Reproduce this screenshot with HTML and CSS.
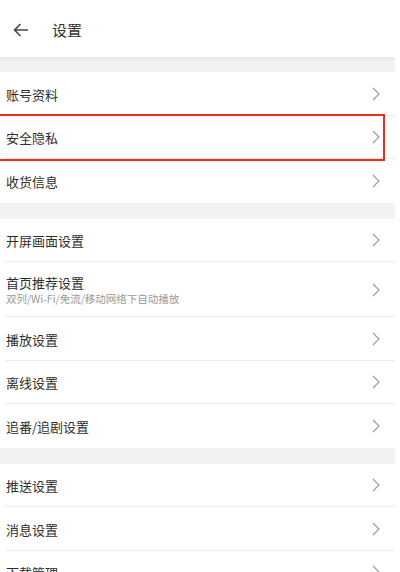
FILE: index.html
```html
<!DOCTYPE html>
<html lang="zh">
<head>
<meta charset="utf-8">
<link rel="stylesheet" href="styles.css">
</head>
<body>
<div class="page">
  <header class="topbar">
    <svg class="back" width="16" height="14" viewBox="0 0 16 14"><path d="M15 7H1.5M7.5 1L1.5 7l6 6" fill="none" stroke="#444" stroke-width="1.6"/></svg>
    <span class="title">设置</span>
  </header>
  <div class="gap first"></div>
  <section class="group">
    <div class="row"><span class="label">账号资料</span><svg class="chev" viewBox="0 0 8 14"><path d="M1 1l6 6-6 6" fill="none" stroke="#999" stroke-width="1.1"/></svg></div>
    <div class="row hl"><span class="label">安全隐私</span><svg class="chev" viewBox="0 0 8 14"><path d="M1 1l6 6-6 6" fill="none" stroke="#999" stroke-width="1.1"/></svg></div>
    <div class="row last"><span class="label">收货信息</span><svg class="chev" viewBox="0 0 8 14"><path d="M1 1l6 6-6 6" fill="none" stroke="#999" stroke-width="1.1"/></svg></div>
  </section>
  <div class="gap"></div>
  <section class="group">
    <div class="row"><span class="label">开屏画面设置</span><svg class="chev" viewBox="0 0 8 14"><path d="M1 1l6 6-6 6" fill="none" stroke="#999" stroke-width="1.1"/></svg></div>
    <div class="row tall"><div class="texts"><span class="label">首页推荐设置</span><span class="sub">双列/Wi-Fi/免流/移动网络下自动播放</span></div><svg class="chev" viewBox="0 0 8 14"><path d="M1 1l6 6-6 6" fill="none" stroke="#999" stroke-width="1.1"/></svg></div>
    <div class="row"><span class="label">播放设置</span><svg class="chev" viewBox="0 0 8 14"><path d="M1 1l6 6-6 6" fill="none" stroke="#999" stroke-width="1.1"/></svg></div>
    <div class="row"><span class="label">离线设置</span><svg class="chev" viewBox="0 0 8 14"><path d="M1 1l6 6-6 6" fill="none" stroke="#999" stroke-width="1.1"/></svg></div>
    <div class="row last"><span class="label">追番/追剧设置</span><svg class="chev" viewBox="0 0 8 14"><path d="M1 1l6 6-6 6" fill="none" stroke="#999" stroke-width="1.1"/></svg></div>
  </section>
  <div class="gap"></div>
  <section class="group">
    <div class="row"><span class="label">推送设置</span><svg class="chev" viewBox="0 0 8 14"><path d="M1 1l6 6-6 6" fill="none" stroke="#999" stroke-width="1.1"/></svg></div>
    <div class="row"><span class="label">消息设置</span><svg class="chev" viewBox="0 0 8 14"><path d="M1 1l6 6-6 6" fill="none" stroke="#999" stroke-width="1.1"/></svg></div>
    <div class="row"><span class="label">下载管理</span><svg class="chev" viewBox="0 0 8 14"><path d="M1 1l6 6-6 6" fill="none" stroke="#999" stroke-width="1.1"/></svg></div>
  </section>
</div>
</body>
</html>
```
FILE: styles.css
```css
html, body {
  margin: 0;
  padding: 0;
  background: #fff;
}
.page {
  width: 400px;
  height: 572px;
  overflow: hidden;
  font-family: "Noto Sans CJK SC", "Noto Sans", sans-serif;
  color: #333;
}
.topbar {
  height: 57px;
  display: flex;
  align-items: center;
  padding-left: 13px;
  box-sizing: border-box;
}
.back {
  display: block;
  margin-top: 3px;
}
.title {
  margin-left: 23px;
  font-size: 15px;
  color: #333;
  margin-top: 2px;
}
.gap {
  height: 16px;
  margin-right: 5px;
  background: #f2f2f4;
}
.gap.first {
  height: 15px;
  background: linear-gradient(#e8e8ea, #f2f2f4 4px);
}
.row {
  height: 43.5px;
  display: flex;
  align-items: center;
  justify-content: space-between;
  padding: 0 15px 0 6px;
  margin-right: 5px;
  box-sizing: border-box;
  position: relative;
  background: linear-gradient(#ededed, #ededed) no-repeat 5px 100% / calc(100% - 5px) 1px;
}
.row.last {
  background: none;
}
.row.tall {
  height: 55px;
}
.label {
  font-size: 13px;
  color: #2e2e2e;
  line-height: 16px;
  margin-top: 2px;
}
.texts {
  display: flex;
  flex-direction: column;
}
.texts .label {
  font-size: 13px;
  line-height: 18px;
  margin-top: 0;
}
.sub {
  font-size: 10.5px;
  color: #999;
  line-height: 14px;
}
.chev {
  width: 8px;
  height: 14px;
  display: block;
}
.row.hl::after {
  content: "";
  position: absolute;
  left: -3px;
  top: -2px;
  width: 388px;
  height: 47px;
  border: 2px solid #f02a1e;
  box-sizing: border-box;
}
```
